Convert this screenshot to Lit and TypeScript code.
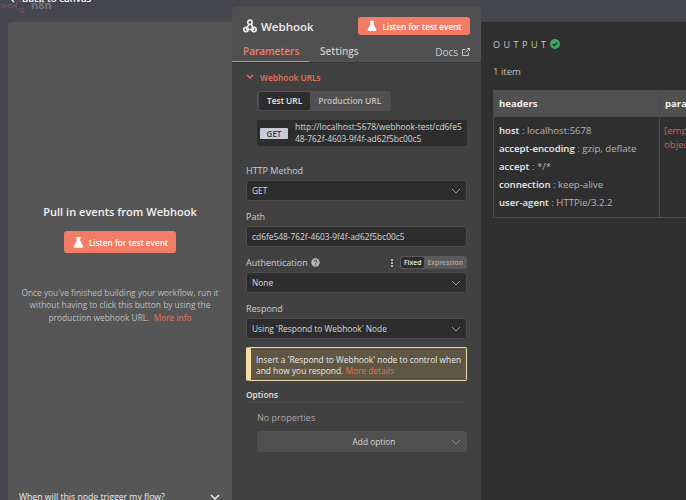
import { html, css, LitElement, svg } from 'lit'
import { customElement } from 'lit/decorators.js'

const flask = svg`<path d="M4.500 1h5v1H9v3.600l3 5.200c.5.900-.1 1.900-1.100 1.900H3.100C2.100 12.700 1.500 11.700 2 10.800l3-5.200V2h-.5z" fill="currentColor"/>`

const chevron = html`<svg class="chev" width="10" height="6" viewBox="0 0 10 6"><path d="M1 1l4 4 4-4" fill="none" stroke="#9a9a9a" stroke-width="1"/></svg>`

@customElement('app-root')
export class AppRoot extends LitElement {
    static styles = css`
        :host {
            display: block;
            position: relative;
            width: 686px;
            height: 500px;
            overflow: hidden;
            background: #46464f;
            font-family: 'Open Sans', sans-serif;
            font-size: 9px;
            color: #d4d4d4;
        }

        .logo {
            position: absolute;
            left: 1px;
            top: 0;
        }

        .n8n {
            position: absolute;
            left: 31px;
            top: -2px;
            font-size: 11px;
            line-height: 14px;
            font-weight: 700;
            color: #77777c;
        }

        .back {
            position: absolute;
            left: 10px;
            top: -8px;
            display: flex;
            align-items: center;
            gap: 7px;
            color: #fff;
            font-size: 9.700px;
            line-height: 13px;
            font-weight: 600;
        }

        .page {
            display: flex;
            align-items: flex-start;
            height: 500px;
            padding-left: 8px;
            box-sizing: border-box;
        }

        .left {
            width: 224px;
            height: 500px;
            margin-top: 22px;
            flex: none;
            background: #565656;
            border-top-left-radius: 4px;
            box-sizing: border-box;
            padding-top: 182px;
            display: flex;
            flex-direction: column;
            align-items: center;
            text-align: center;
        }

        .left h2 {
            margin: 0;
            font-size: 11.050px;
            line-height: 16px;
            font-weight: 600;
            color: #f2f2f2;
        }

        .btn {
            display: inline-flex;
            align-items: center;
            justify-content: center;
            gap: 4px;
            background: #f27c65;
            color: #fff;
            border-radius: 3px;
            font-weight: 600;
            font-size: 8.200px;
            box-sizing: border-box;
        }

        .left .btn {
            width: 112px;
            height: 22px;
            margin-top: 11px;
        }

        .left p {
            margin: 34px 0 0;
            font-size: 8.350px;
            line-height: 12.300px;
            color: #bdbdbd;
            white-space: nowrap;
        }

        .link {
            color: #e7705c;
        }

        .faq {
            position: absolute;
            left: 19px;
            top: 491px;
            width: 201px;
            display: flex;
            justify-content: space-between;
            align-items: center;
            color: #ececec;
            font-size: 8.700px;
        }

        .center {
            width: 249px;
            height: 494px;
            margin-top: 6px;
            flex: none;
            background: #414141;
            border-radius: 4px 4px 0 0;
            overflow: hidden;
        }

        .head {
            background: #505050;
            height: 57px;
            box-sizing: border-box;
            border-bottom: 1px solid #383838;
        }

        .title {
            display: flex;
            align-items: center;
            justify-content: space-between;
            padding: 11px 11px 0 11px;
        }

        .name {
            display: flex;
            align-items: center;
            gap: 4px;
            font-size: 11.500px;
            font-weight: 600;
            color: #ececec;
        }

        .title .btn {
            width: 112px;
            height: 18px;
        }

        .tabs {
            display: flex;
            align-items: center;
            margin-top: 7px;
            height: 20px;
            font-size: 10px;
            font-weight: 600;
            color: #c9c9c9;
        }

        .tab {
            padding: 0 11px;
            height: 20px;
            line-height: 18px;
            box-sizing: border-box;
        }

        .tab.on {
            color: #f27c65;
            border-bottom: 1px solid #f27c65;
            width: 77px;
        }

        .docs {
            margin-left: auto;
            margin-right: 11px;
            display: flex;
            align-items: center;
            gap: 4px;
            font-weight: 400;
        }

        .body {
            padding: 7px 14px 0;
            font-size: 8.400px;
        }

        .sec {
            display: flex;
            align-items: center;
            gap: 6px;
            color: #e7705c;
            font-weight: 600;
            height: 14px;
        }

        .urls {
            margin-left: 11px;
        }

        .switch {
            display: flex;
            width: fit-content;
            margin-top: 7px;
            padding: 1px 2px;
            border-radius: 3px;
            background: #505050;
            color: #c0c0c0;
            font-weight: 600;
        }

        .switch span {
            height: 18px;
            line-height: 18px;
            padding: 0 8px;
            border-radius: 2px;
        }

        .switch .on {
            background: #2d2d2d;
            color: #e6e6e6;
        }

        .url {
            display: flex;
            align-items: center;
            gap: 7px;
            margin-top: 9px;
            height: 26px;
            padding-left: 3px;
            padding-right: 4px;
            background: #2d2d2d;
            border-radius: 2px;
            line-height: 12.300px;
            color: #d8d8d8;
            word-break: break-all;
        }

        .tag {
            flex: none;
            width: 28px;
            height: 11px;
            line-height: 11px;
            text-align: center;
            background: #c7cbd6;
            color: #3b3b3b;
            border-radius: 1px;
            font-weight: 600;
            font-size: 8px;
        }

        label {
            display: flex;
            align-items: center;
            height: 13px;
            color: #cfcfcf;
            font-size: 9px;
        }

        .field {
            display: flex;
            align-items: center;
            justify-content: space-between;
            box-sizing: border-box;
            height: 21px;
            margin-top: 3px;
            padding: 0 5px;
            background: #2d2d2d;
            border: 1px solid #4c4c4c;
            border-radius: 3px;
            color: #dadada;
            font-size: 8.400px;
        }

        .group {
            margin-top: 9px;
        }

        .group.first {
            margin-top: 18px;
        }

        .help {
            margin-left: 3px;
        }

        .dots {
            margin-left: auto;
            margin-right: 7px;
            display: flex;
            flex-direction: column;
            gap: 1px;
        }

        .dots i {
            width: 2px;
            height: 2px;
            background: #d8d8d8;
            border-radius: 50%;
        }

        .fx {
            display: flex;
            padding: 1px;
            background: #5a5a5a;
            border-radius: 3px;
            font-size: 6.800px;
            font-weight: 600;
            color: #a8a8a8;
        }

        .fx span {
            height: 11px;
            line-height: 11px;
            padding: 0 3px;
        }

        .fx .on {
            background: #2d2d2d;
            color: #eeeeee;
            border-radius: 2px;
        }

        .note {
            margin-top: 8px;
            height: 34px;
            box-sizing: border-box;
            padding: 6px 2px 0 5px;
            background: #5f5644;
            border: 1px solid #ecd9ad;
            border-left: 5px solid #f5dba6;
            border-radius: 2px;
            font-size: 8.400px;
            color: #e8e8e8;
            line-height: 11px;
        }

        .options {
            margin-top: 7px;
            height: 14px;
            line-height: 13px;
            font-weight: 600;
            color: #e0e0e0;
            border-bottom: 1px solid #4b4b4b;
            font-size: 8.400px;
        }

        .none {
            margin: 9px 0 0 11px;
            color: #a8a8a8;
            font-size: 9px;
            line-height: 12px;
        }

        .add {
            margin: 7px 0 0 11px;
            height: 21px;
            background: #505050;
            border-radius: 3px;
            position: relative;
            display: flex;
            align-items: center;
            justify-content: center;
            padding-left: 24px;
            color: #d8d8d8;
            font-size: 8.300px;
        }

        .add .chev {
            position: absolute;
            right: 6px;
            top: 8px;
        }

        .right {
            flex: 1;
            min-width: 0;
            height: 500px;
            margin-top: 22px;
            background: #2f2f2f;
            padding: 16px 0 0 12px;
            box-sizing: border-box;
            overflow: hidden;
        }

        .out {
            display: flex;
            align-items: center;
            gap: 1px;
            font-size: 9px;
            letter-spacing: 3.500px;
            color: #c8c8c8;
            height: 12px;
        }

        .count {
            margin-top: 16px;
            font-size: 9.500px;
            color: #c0c0c0;
            height: 12px;
            line-height: 12px;
        }

        table {
            margin-top: 12px;
            border-collapse: collapse;
            table-layout: fixed;
            width: 250px;
            font-size: 9.600px;
        }

        th {
            background: #505050;
            height: 26px;
            box-sizing: border-box;
            padding: 0 5px;
            text-align: left;
            color: #eeeeee;
            font-weight: 700;
            border: 1px solid #4c4c4c;
            white-space: nowrap;
        }

        th.first {
            width: 166px;
        }

        td {
            vertical-align: top;
            height: 101px;
            box-sizing: border-box;
            padding: 5px 4px 0 5px;
            border: 1px solid #4c4c4c;
            color: #b5b5b5;
            line-height: 18px;
            white-space: nowrap;
        }

        td b {
            color: #ececec;
            font-weight: 600;
        }

        td.empty {
            color: #d6604f;
            line-height: 14px;
            padding-left: 4px;
            padding-top: 7px;
        }
    `

    render() {
        return html`
            <div class="page">
                <section class="left">
                    <h2>Pull in events from Webhook</h2>
                    <span class="btn"><svg width="13" height="13" viewBox="0 0 14 14">${flask}</svg>Listen for test event</span>
                    <p>Once you've finished building your workflow, run it<br />without having to click this button by using the<br />production webhook URL. <span class="link">&nbsp;More info</span></p>
                </section>
                <section class="center">
                    <div class="head">
                        <div class="title">
                            <span class="name">
                                <svg width="14" height="14" viewBox="0 0 14 14" fill="none" stroke="#eee" stroke-width="1.600">
                                    <circle cx="7" cy="3.300" r="2.200" /><circle cx="3" cy="10.500" r="2.200" /><circle cx="11" cy="10.500" r="2.200" />
                                    <path d="M6 5.300L3 10.500M8 5L11 10.500M3 10.500h8" />
                                </svg>
                                Webhook
                            </span>
                            <span class="btn"><svg width="12" height="12" viewBox="0 0 14 14">${flask}</svg>Listen for test event</span>
                        </div>
                        <div class="tabs">
                            <span class="tab on">Parameters</span>
                            <span class="tab">Settings</span>
                            <span class="docs">Docs
                                <svg width="8" height="8" viewBox="0 0 8 8" fill="none" stroke="#c9c9c9" stroke-width="1"><path d="M6.500 4.500v3h-6v-6h3M3.500 4.500l4-4M5 .5h2.500V3" /></svg>
                            </span>
                        </div>
                    </div>
                    <div class="body">
                        <div class="sec">
                            <svg width="8" height="6" viewBox="0 0 8 6"><path d="M1 1l3 3 3-3" fill="none" stroke="#e7705c" stroke-width="1.500" /></svg>
                            Webhook URLs
                        </div>
                        <div class="urls">
                            <div class="switch"><span class="on">Test URL</span><span>Production URL</span></div>
                            <div class="url"><span class="tag">GET</span><span>http://localhost:5678/webhook-test/cd6fe548-762f-4603-9f4f-ad62f5bc00c5</span></div>
                        </div>
                        <div class="group first">
                            <label>HTTP Method</label>
                            <div class="field">GET ${chevron}</div>
                        </div>
                        <div class="group">
                            <label>Path</label>
                            <div class="field">cd6fe548-762f-4603-9f4f-ad62f5bc00c5</div>
                        </div>
                        <div class="group">
                            <label>Authentication
                                <svg class="help" width="9" height="9" viewBox="0 0 9 9"><circle cx="4.500" cy="4.500" r="4.200" fill="#b8b8b8" /><path d="M3.200 3.500a1.300 1.300 0 1 1 1.900 1.200c-.5.300-.6.500-.6 1" fill="none" stroke="#414141" stroke-width="1" /><circle cx="4.500" cy="7" r=".6" fill="#414141" /></svg>
                                <span class="dots"><i></i><i></i><i></i></span>
                                <span class="fx"><span class="on">Fixed</span><span>Expression</span></span>
                            </label>
                            <div class="field">None ${chevron}</div>
                        </div>
                        <div class="group">
                            <label>Respond</label>
                            <div class="field">Using 'Respond to Webhook' Node ${chevron}</div>
                        </div>
                        <div class="note">Insert a 'Respond to Webhook' node to control when and how you respond. <span class="link">More details</span></div>
                        <div class="options">Options</div>
                        <div class="none">No properties</div>
                        <div class="add">Add option ${chevron}</div>
                    </div>
                </section>
                <section class="right">
                    <div class="out">OUTPUT
                        <svg width="10" height="10" viewBox="0 0 10 10"><circle cx="5" cy="5" r="5" fill="#3fa866" /><path d="M2.700 5.100l1.700 1.700 3-3.200" fill="none" stroke="#2f2f2f" stroke-width="1.400" /></svg>
                    </div>
                    <div class="count">1 item</div>
                    <table>
                        <tr><th class="first">headers</th><th>parameters</th></tr>
                        <tr>
                            <td>
                                <b>host</b> : localhost:5678<br />
                                <b>accept-encoding</b> : gzip, deflate<br />
                                <b>accept</b> : */*<br />
                                <b>connection</b> : keep-alive<br />
                                <b>user-agent</b> : HTTPie/3.2.2
                            </td>
                            <td class="empty">[empty<br />object]</td>
                        </tr>
                    </table>
                </section>
            </div>
            <svg class="logo" width="26" height="13" viewBox="0 0 26 13" fill="none" stroke="#74506a" stroke-width="1.100">
                <circle cx="2" cy="6" r="1.800" /><circle cx="9.500" cy="6" r="1.800" /><circle cx="21" cy="10" r="2" />
                <path d="M3.800 6h3.900M11.300 6h3c1.500 0 1.500-5 3-5h4M14.300 6c1.500 0 1.500 4 3 4h1.800" />
            </svg>
            <span class="n8n">n8n</span>
            <span class="back"><svg width="5" height="8" viewBox="0 0 5 8"><path d="M4 1L1 4l3 3" fill="none" stroke="#fff" stroke-width="1.400" /></svg>Back to canvas</span>
            <div class="faq">When will this node trigger my flow?
                <svg width="10" height="6" viewBox="0 0 10 6"><path d="M1 1l4 4 4-4" fill="none" stroke="#eee" stroke-width="1.500" /></svg>
            </div>
        `
    }
}
